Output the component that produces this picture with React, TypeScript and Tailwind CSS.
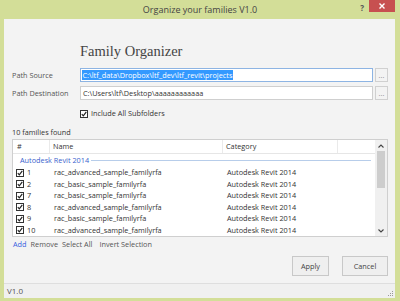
import React from "react";

const font = { fontFamily: '"Open Sans", "Noto Sans", sans-serif' };

function Check() {
  return (
    <span className="inline-flex h-[8px] w-[8px] items-center justify-center border border-[#333] bg-white">
      <svg width="6" height="6" viewBox="0 0 6 6">
        <path d="M0.8 3.2 L2.3 4.8 L5.3 0.9" stroke="#222" strokeWidth="1.2" fill="none" />
      </svg>
    </span>
  );
}

const rows = [
  ["1", "rac_advanced_sample_familyrfa"],
  ["2", "rac_basic_sample_familyrfa"],
  ["7", "rac_basic_sample_familyrfa"],
  ["8", "rac_advanced_sample_familyrfa"],
  ["9", "rac_basic_sample_familyrfa"],
  ["10", "rac_advanced_sample_familyrfa"],
];

export default function App() {
  return (
    <div className="flex h-[301px] w-[400px] flex-col bg-[#d3de98] text-[7.3px] text-[#333]" style={font}>
      {/* title bar */}
      <div className="relative flex h-[19px] items-center justify-center">
        <span className="text-[9px] text-[#444]">Organize your families V1.0</span>
        <span className="absolute right-[36px] top-[2px] text-[8px] font-bold text-[#555]">?</span>
        <div className="absolute right-[5px] top-0 flex h-[12px] w-[26px] items-center justify-center bg-[#c75050]">
          <svg width="6" height="6" viewBox="0 0 6 6">
            <path d="M0.5 0.5 L5.5 5.5 M5.5 0.5 L0.5 5.5" stroke="#fff" strokeWidth="1.4" />
          </svg>
        </div>
      </div>

      {/* client area */}
      <div className="mb-[3px] ml-[4px] mr-[5px] flex flex-1 flex-col bg-[#f3f3f3]">
        <div className="flex flex-1 flex-col pl-[8px] pr-[7px]">
          <div className="ml-[68px] mt-[24px] h-[16px] text-[14.5px] leading-[16px] text-[#444]" style={{ fontFamily: '"Liberation Serif", serif' }}>
            Family Organizer
          </div>

          <div className="mt-[9px] flex h-[14px] items-center">
            <span className="w-[68px] text-[#555]">Path Source</span>
            <div className="flex h-[14px] flex-1 items-center border border-[#8db4e3] bg-white pl-[1px]">
              <span className="bg-[#3399ff] px-[0.5px] leading-[10px] text-white">C:\ltf_data\Dropbox\ltf_dev\ltf_revit\projects</span>
            </div>
            <div className="ml-[2px] flex h-[14px] w-[13px] items-center justify-center border border-[#d0d0d0] text-[#888]">...</div>
          </div>

          <div className="mt-[4px] flex h-[14px] items-center">
            <span className="w-[68px] text-[#555]">Path Destination</span>
            <div className="flex h-[14px] flex-1 items-center border border-[#cfcfcf] bg-white pl-[2px]">
              C:\Users\ltf\Desktop\aaaaaaaaaaaa
            </div>
            <div className="ml-[2px] flex h-[14px] w-[13px] items-center justify-center border border-[#d0d0d0] text-[#888]">...</div>
          </div>

          <div className="ml-[68px] mt-[9px] flex h-[9px] items-center gap-[3px]">
            <Check />
            <span>Include All Subfolders</span>
          </div>

          <div className="mt-[9px] h-[10px] leading-[10px]">10 families found</div>

          {/* list */}
          <div className="mt-[2px] flex h-[98px] border border-[#cfcfcf] bg-white">
            <div className="flex flex-1 flex-col">
              <div className="flex h-[14px] items-center border-b border-[#e6e6e6]">
                <div className="flex h-full w-[37px] items-center border-r border-[#eaeaea] pl-[4px]">#</div>
                <div className="flex h-full w-[173px] items-center border-r border-[#eaeaea] pl-[3px]">Name</div>
                <div className="flex h-full w-[115px] items-center border-r border-[#eaeaea] pl-[3px]">Category</div>
              </div>
              <div className="flex h-[13px] items-center pl-[7px] pr-[4px]">
                <span className="text-[#3a5fcd]">Autodesk Revit 2014</span>
                <div className="ml-[2px] h-px flex-1 bg-[#b7cdea]" />
              </div>
              {rows.map(([n, name], i) => (
                <div key={i} className="flex h-[11.5px] items-center">
                  <div className="flex w-[37px] items-center gap-[3px] pl-[3px]">
                    <Check />
                    <span>{n}</span>
                  </div>
                  <div className="w-[173px] pl-[4px]">{name}</div>
                  <div className="pl-[4px]">Autodesk Revit 2014</div>
                </div>
              ))}
            </div>
            {/* scrollbar */}
            <div className="flex w-[12px] flex-col items-center bg-[#f0f0f0]">
              <div className="flex h-[11px] items-center justify-center">
                <svg width="6" height="4" viewBox="0 0 6 4"><path d="M0.5 3.5 L3 1 L5.5 3.5" stroke="#444" strokeWidth="1.1" fill="none" /></svg>
              </div>
              <div className="h-[37px] w-[8px] bg-[#cdcdcd]" />
              <div className="flex-1" />
              <div className="flex h-[11px] items-center justify-center">
                <svg width="6" height="4" viewBox="0 0 6 4"><path d="M0.5 0.5 L3 3 L5.5 0.5" stroke="#444" strokeWidth="1.1" fill="none" /></svg>
              </div>
            </div>
          </div>

          <div className="mt-[2px] flex h-[10px] items-center gap-[4px] pl-[1px] text-[#555]">
            <span className="text-[#3a5fe0]">Add</span>
            <span>Remove</span>
            <span>Select All</span>
            <span className="ml-[3px]">Invert Selection</span>
          </div>

          <div className="mt-[7px] flex justify-end gap-[13px]">
            <div className="flex h-[20px] w-[37px] items-center justify-center border border-[#c8c8c8] bg-[#efefef] text-[#444]">Apply</div>
            <div className="flex h-[20px] w-[46px] items-center justify-center border border-[#c8c8c8] bg-[#efefef] text-[#444]">Cancel</div>
          </div>
        </div>

        {/* status bar */}
        <div className="relative flex h-[15px] items-center border-t border-[#dedede] bg-[#f0f0f0] pl-[3px] text-[8px] text-[#555]">
          V1.0
          <svg className="absolute bottom-[1px] right-[1px]" width="7" height="7" viewBox="0 0 7 7">
            <rect x="5" y="1" width="1" height="1" fill="#999" />
            <rect x="3" y="3" width="1" height="1" fill="#999" />
            <rect x="5" y="3" width="1" height="1" fill="#999" />
            <rect x="1" y="5" width="1" height="1" fill="#999" />
            <rect x="3" y="5" width="1" height="1" fill="#999" />
            <rect x="5" y="5" width="1" height="1" fill="#999" />
          </svg>
        </div>
      </div>
    </div>
  );
}
